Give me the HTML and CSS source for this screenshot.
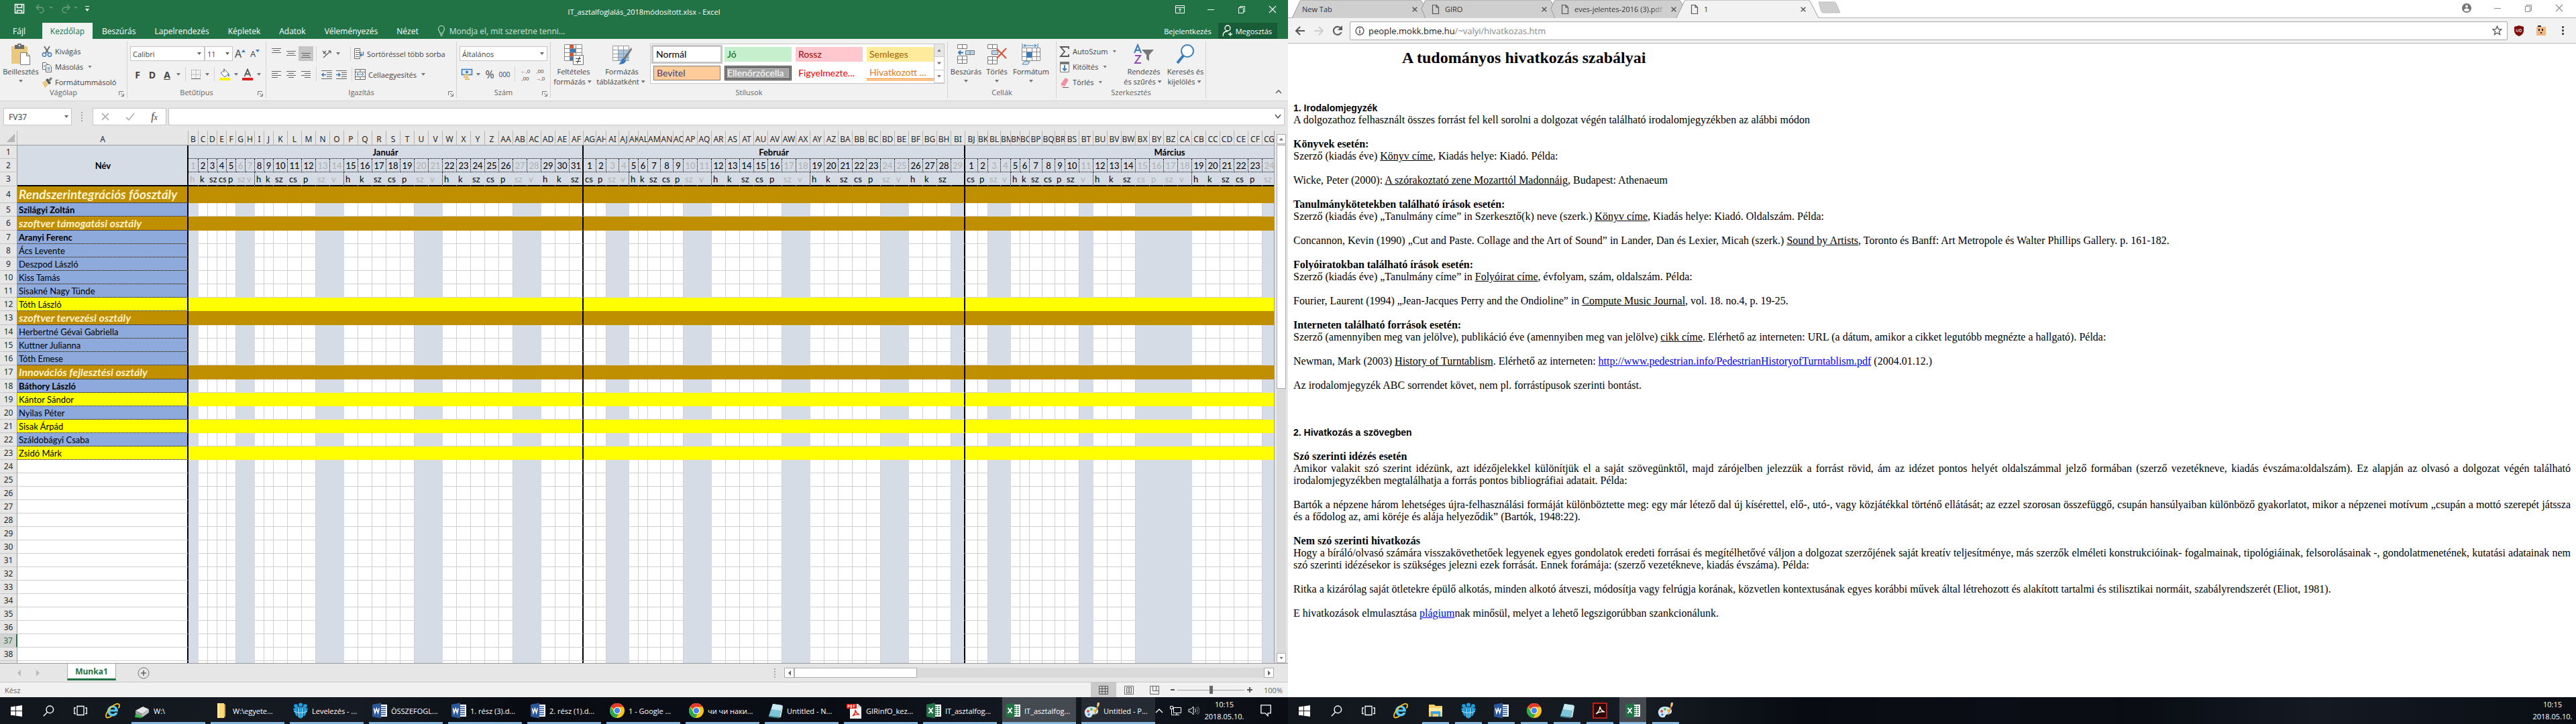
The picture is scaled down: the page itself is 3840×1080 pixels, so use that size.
FILE: index.html
```html
<!DOCTYPE html>
<html lang="hu">
<head>
<meta charset="utf-8">
<title>IT_asztalfoglalás_2018módosított.xlsx - Excel</title>
<link rel="stylesheet" href="styles.css">
</head>
<body>
<svg class="defs" aria-hidden="true">
  <symbol id="i-win" viewBox="0 0 16 16"><path fill="#fff" d="M0 2.300l6.600-.9v6.200H0zM7.500 1.300L16 0v7.600H7.500zM0 8.500h6.600v6.200L0 13.800zM7.500 8.500H16V16l-8.500-1.200z"/></symbol>
  <symbol id="i-search" viewBox="0 0 16 16"><g fill="none" stroke="#fff" stroke-width="1.300"><circle cx="9.700" cy="6" r="5"/><path d="M6.200 9.700L.8 15.200"/></g></symbol>
  <symbol id="i-view" viewBox="0 0 20 16"><g fill="none" stroke="#fff" stroke-width="1.300"><path d="M5 1.500h10v13H5zM3 4H.7v8.500H3M17 4h2.300v8.500H17"/></g></symbol>
  <symbol id="i-ie" viewBox="0 0 24 24"><path d="M12 4.500a8 8 0 1 0 7.600 10.600h-4.300a3.900 3.900 0 0 1-7.200-1.700H20A8 8 0 0 0 12 4.500zM8.200 10.600a3.800 3.800 0 0 1 7.500 0z" fill="#55c8f5" fill-rule="evenodd"/><path d="M20.500 8.500C23.800 3 21 .4 15.500 3 8 6.500 1.500 15.500 2 20.500c.4 3.300 5 2 8.500-.5" fill="none" stroke="#f7c62f" stroke-width="1.800"/></symbol>
  <symbol id="i-drive" viewBox="0 0 24 24"><path d="M2 12l11-6 9 4-10 7z" fill="#e4e4e4"/><path d="M2 12l10 5v5L2 17z" fill="#9a9a9a"/><path d="M12 17l10-7v5l-10 7z" fill="#bdbdbd"/><path d="M2 17l9 3v3L1 22z" fill="#38b54a"/></symbol>
  <symbol id="i-folder" viewBox="0 0 24 24"><path d="M6 1h10v22H6z" fill="#fbd976"/><path d="M16 2l2 1v17l-2 3z" fill="#d9a93c"/><path d="M6 1h3v22H6z" fill="#ffeaa6"/></symbol>
  <symbol id="i-explorer" viewBox="0 0 24 24"><path d="M2 3h8l2 2h10v16H2z" fill="#f6cf68"/><path d="M2 8h20v6H2z" fill="#ffe8a0"/><path d="M5 21v-8h14v8h-3v-4H8v4z" fill="#3ea1e2"/></symbol>
  <symbol id="i-mail" viewBox="0 0 24 24"><g fill="#1ba1e2"><circle cx="12" cy="3.500" r="3"/><circle cx="5" cy="5" r="2.800"/><circle cx="19" cy="5" r="2.800"/><path d="M9 7h6v15l-3 2-3-2zM1 9l6-2 1 14-3-2zM23 9l-6-2-1 14 3-2z"/></g><path d="M8 6l1.500 16M16 6l-1.500 16M2 13c6 3 14 3 20 0" fill="none" stroke="#bfe8fa"/></symbol>
  <symbol id="i-word" viewBox="0 0 24 24"><path d="M12 3h11v18H12z" fill="#fff"/><path d="M14 6h7M14 9h7M14 12h7M14 15h7M14 18h7" stroke="#2b579a" stroke-width="1.400"/><path d="M1 3l13-2.500v23L1 21z" fill="#2b579a"/><path d="M3.500 8.500l1.500 7 2.300-6.500 2.300 6.500 1.600-7" fill="none" stroke="#fff" stroke-width="1.600"/></symbol>
  <symbol id="i-excel" viewBox="0 0 24 24"><path d="M12 3h11v18H12z" fill="#fff"/><path d="M14 6h3M18 6h3M14 9h3M18 9h3M14 12h3M18 12h3M14 15h3M18 15h3M14 18h3M18 18h3" stroke="#217346" stroke-width="1.700"/><path d="M1 3l13-2.500v23L1 21z" fill="#217346"/><path d="M4.500 8l6 8M10.500 8l-6 8" stroke="#fff" stroke-width="2"/></symbol>
  <symbol id="i-chrome" viewBox="0 0 24 24"><circle cx="12" cy="12" r="11" fill="#f8c51c"/><path d="M12 1a11 11 0 0 1 9.500 5.500H12A5.500 5.500 0 0 0 7 10L2.800 6A11 11 0 0 1 12 1z" fill="#e23b2e"/><path d="M2.500 6.500L8 15a5 5 0 0 0 6 2l-3.500 6A11 11 0 0 1 2.500 6.500z" fill="#2da94f"/><circle cx="12" cy="12" r="5.300" fill="#fff"/><circle cx="12" cy="12" r="4.200" fill="#4384f3"/></symbol>
  <symbol id="i-note" viewBox="0 0 24 24"><path d="M8 2l14 2-4 18-16-2z" fill="#7cc5d6"/><path d="M8 2l14 2-2 8L6 10z" fill="#c7eaf2"/><path d="M18 22l4-18 1 2-3 16z" fill="#e9f4f6"/><path d="M2 20l16 2v1.500L2 21.500z" fill="#40808f"/></symbol>
  <symbol id="i-pdf" viewBox="0 0 24 24"><path d="M5 2h12l5 5v17H5z" fill="#f5f5f5"/><path d="M17 2l5 5h-5z" fill="#c9c9c9"/><path d="M0 2h15v7H0z" fill="#e2231a"/><path d="M2 7.500V4h2v1.800H2M6 4v3.500h1.500V4zM10 7.500V4h2.500M10 5.800h2" fill="none" stroke="#fff" stroke-width=".9"/><path d="M9 20c3-3 4.500-6 4-9 1 4 3 6 6 7-4-1-7 0-10 2z" fill="none" stroke="#e2231a" stroke-width="1.400"/></symbol>
  <symbol id="i-acro" viewBox="0 0 24 24"><path d="M2 1h20v22H2z" fill="#2a0a09" stroke="#e8261c" stroke-width="1.500"/><path d="M6 17c4-3 6-7 6-11 1 5 3 7 7 8-5-1-9 0-13 3z" fill="none" stroke="#fff" stroke-width="1.300"/></symbol>
  <symbol id="i-paint" viewBox="0 0 24 24"><path d="M11 6C4 6 0 11 1 16c1 6 6 7 9 6 2-1 1-3 3-4s7 0 8-4c1-5-4-8-10-8z" fill="#cfe6f5"/><circle cx="6" cy="13" r="2" fill="#e54b3c"/><circle cx="11" cy="10" r="1.900" fill="#58b947"/><circle cx="16" cy="12" r="1.900" fill="#f3b62b"/><circle cx="7" cy="18" r="1.700" fill="#3b7dd8"/><path d="M21 1l2 1-7 17-1-1z" fill="#d58a35"/><path d="M20 0h3l-1 6-3-1z" fill="#f1c98d"/></symbol>
  <symbol id="i-restore" viewBox="0 0 12 12"><path d="M1.500 3.500h7v8h-7zM3.500 3.500v-2h7v8h-2" fill="none" stroke="currentColor"/></symbol>
  <symbol id="i-close" viewBox="0 0 12 12"><path d="M1 1l10 10M11 1L1 11" fill="none" stroke="currentColor" stroke-width="1.100"/></symbol>
  <symbol id="i-x" viewBox="0 0 12 12"><path d="M1 1l10 10M11 1L1 11" fill="none" stroke="currentColor" stroke-width="2.200"/></symbol>
  <symbol id="i-min" viewBox="0 0 12 12"><path d="M1 6.500h10" stroke="currentColor"/></symbol>
  <symbol id="i-page" viewBox="0 0 12 16"><path d="M1.500 1.500h5.500l3.500 3.500v9.500h-9zM7 1.500V5h3.500" fill="none" stroke="#555" stroke-width="1.200"/></symbol>
  <symbol id="i-launch" viewBox="0 0 8 8"><path d="M.5 6V.5H7M3 3l4 4M7.500 3.500v4h-4" fill="none" stroke="#777"/></symbol>
  <symbol id="a-l" viewBox="0 0 14 12"><path d="M0 1.500h14M0 4.500h9M0 7.500h14M0 10.500h9" stroke="#666"/></symbol>
  <symbol id="a-c" viewBox="0 0 14 12"><path d="M0 1.500h14M3 4.500h8M0 7.500h14M3 10.500h8" stroke="#666"/></symbol>
  <symbol id="a-r" viewBox="0 0 14 12"><path d="M0 1.500h14M5 4.500h9M0 7.500h14M5 10.500h9" stroke="#666"/></symbol>
  <symbol id="a-v" viewBox="0 0 14 8"><path d="M0 .5h14M2 3.500h10M0 6.500h14" stroke="#666"/></symbol>
</svg>

<main class="desktop">
<section class="screen excel">
  <header class="titlebar">
    <div class="quick">
      <button aria-label="Mentés"><svg width="16" height="16"><path d="M1.500 1.500h13v13h-13zM4.500 1.500v5h7v-5M4.500 14.500v-4h7v4" fill="none" stroke="#fff" stroke-width="1.500"/></svg></button>
      <button class="dim" aria-label="Visszavonás"><svg width="28" height="14"><path d="M6 1L2 5l4 4M2 5h7a4 4 0 0 1 0 8H7" fill="none" stroke="#5d9476" stroke-width="1.800"/><path d="M21 4h6l-3 3z" fill="#5d9476"/></svg></button>
      <button class="dim" aria-label="Ismét"><svg width="28" height="14"><path d="M11 1l4 4-4 4M15 5H8a4 4 0 0 0 0 8h2" fill="none" stroke="#5d9476" stroke-width="1.800"/><path d="M21 4h6l-3 3z" fill="#5d9476"/></svg></button>
      <button aria-label="Testreszabás"><svg width="8" height="12"><path d="M1 2.500h6" stroke="#fff"/><path d="M1 6h6L4 10z" fill="#fff"/></svg></button>
    </div>
    <h1>IT_asztalfoglalás_2018módosított.xlsx - Excel</h1>
    <div class="winbtns">
      <button aria-label="Menüszalag"><svg width="14" height="12"><path d="M.5.500h13v11H.5zM.5 3.500h13M7 10V5M5 7l2-2 2 2" fill="none" stroke="#fff"/></svg></button>
      <button aria-label="Kis méret"><svg width="12" height="12"><use href="#i-min"/></svg></button>
      <button aria-label="Előző méret"><svg width="12" height="12"><use href="#i-restore"/></svg></button>
      <button aria-label="Bezárás"><svg width="12" height="12"><use href="#i-close"/></svg></button>
    </div>
  </header>

  <nav class="tabs">
    <button class="file">Fájl</button>
    <button class="on">Kezdőlap</button>
    <button>Beszúrás</button>
    <button>Lapelrendezés</button>
    <button>Képletek</button>
    <button>Adatok</button>
    <button>Véleményezés</button>
    <button>Nézet</button>
    <button class="tell"><svg width="12" height="16"><path d="M4 11.500C4 9 1.500 8 1.500 5a4.500 4.500 0 0 1 9 0c0 3-2.500 4-2.500 6.500zM4 13.500h4M4.500 15.500h3" fill="none" stroke="#cfe3d8" stroke-width="1.100"/></svg>Mondja el, mit szeretne tenni...</button>
    <button class="login">Bejelentkezés</button>
    <button class="share"><svg width="16" height="18"><circle cx="8" cy="5" r="4" fill="none" stroke="#fff" stroke-width="1.300"/><path d="M1 17c0-5 3-7.500 7-7.500M12 11v6M9 14h6" fill="none" stroke="#fff" stroke-width="1.300"/></svg>Megosztás</button>
  </nav>

  <div class="ribbon">
    <section class="group g-clip">
      <div class="tools row">
        <button class="big w54"><svg width="30" height="32"><path d="M1 4h24v26H1z" fill="#ecc87f"/><path d="M6 2h4a3 3 0 0 1 6 0h4v6H6z" fill="#6a6a6a"/><circle cx="13" cy="3" r="1.300" fill="#fff"/><path d="M14.500 13.500h9l5 5v13h-14zM23.500 13.500v5h5" fill="#fff" stroke="#7a7a7a"/></svg><span>Beillesztés</span><i class="car"></i></button>
        <div class="stack">
          <button class="small"><svg width="16" height="16"><path d="M4 0l6 10M12 0L6 10" stroke="#666" stroke-width="1.800"/><circle cx="4" cy="12.500" r="2.700" fill="none" stroke="#3b7ab8" stroke-width="1.400"/><circle cx="12" cy="12.500" r="2.700" fill="none" stroke="#3b7ab8" stroke-width="1.400"/></svg>Kivágás</button>
          <button class="small"><svg width="16" height="16"><path d="M1.500 1.500h5l2 2v8h-7z" fill="#fff" stroke="#666"/><path d="M6.500 4.500h5l3 3v8h-8z" fill="#fff" stroke="#666"/><path d="M8.500 8.500h4M8.500 10.500h4M8.500 12.500h4M3 5.500h2M3 7.500h2" stroke="#3b7ab8"/></svg>Másolás<i class="car"></i></button>
          <button class="small"><svg width="16" height="16"><path d="M1 8l5-3 4 6-5 5z" fill="#ecc87f"/><path d="M6 4l3-2 5 7-3 2z" fill="#555"/><path d="M10 4l4-4 2 2-3 4z" fill="#777"/></svg>Formátummásoló</button>
        </div>
      </div>
      <h2>Vágólap</h2><button class="launch" aria-label="Vágólap ablak"><svg width="8" height="8"><use href="#i-launch"/></svg></button>
    </section>

    <section class="group g-font">
      <div class="tools">
        <div class="row">
          <label class="combo w111"><select aria-label="Betűtípus"><option>Calibri</option></select></label>
          <label class="combo w42"><select aria-label="Betűméret"><option>11</option></select></label>
          <button class="t"><b class="thin">A</b><svg width="6" height="12"><path d="M0 4h6L3 0z" fill="#3b7ab8"/></svg></button>
          <button class="t"><b class="thin sm">A</b><svg width="6" height="12"><path d="M0 0h6L3 4z" fill="#3b7ab8"/></svg></button>
        </div>
        <div class="row">
          <button class="t"><b>F</b></button><button class="t"><b>D</b></button><button class="t"><b class="u">A</b></button><i class="car"></i><i class="sep"></i>
          <button class="t"><svg width="14" height="14"><path d="M.5.500h13M.5.500v13M13.500.500v13M7 .5v13M.5 7h13" stroke="#777" stroke-dasharray="1 1.500" fill="none"/><path d="M0 13.500h14" stroke="#555"/></svg></button><i class="car"></i><i class="sep"></i>
          <button class="t"><svg width="18" height="18"><path d="M3 7l6-5 6 6-6 5z" fill="#fff" stroke="#666"/><path d="M8 0v6" stroke="#666"/><path d="M14 7c3 3 2 5 1 5s-2-2-1-5z" fill="#3b7ab8"/><path d="M1 14h16v4H1z" fill="#fff200"/></svg></button><i class="car"></i>
          <button class="t"><svg width="18" height="18"><path d="M4.500 12L9 1.500 13.500 12M6 8.500h6" fill="none" stroke="#555" stroke-width="1.800"/><path d="M1 14h16v4H1z" fill="#e01e1e"/></svg></button><i class="car"></i>
        </div>
      </div>
      <h2>Betűtípus</h2><button class="launch" aria-label="Betűtípus ablak"><svg width="8" height="8"><use href="#i-launch"/></svg></button>
    </section>

    <section class="group g-align">
      <div class="tools">
        <div class="row">
          <button class="t top"><svg width="14" height="8"><use href="#a-v"/></svg></button>
          <button class="t"><svg width="14" height="8"><use href="#a-v"/></svg></button>
          <button class="t sel"><svg width="14" height="8"><use href="#a-v"/></svg></button><i class="sep"></i>
          <button class="t"><svg width="17" height="15"><path d="M3 13L14 3M14 3h-3.500M14 3v3.500" fill="none" stroke="#666" stroke-width="1.400"/><path d="M2 3l5 5M3 7l4-4" stroke="#666" stroke-width="1.600"/></svg></button><i class="car"></i><i class="gap8"></i><i class="sep"></i>
          <button class="small"><svg width="16" height="16"><path d="M1.500.500h8v15h-8z" fill="#fff" stroke="#666"/><path d="M3 3.500h5M3 6.500h9M3 9.500h5M3 12.500h5" stroke="#666"/><path d="M14.500 5v5h-4M12 8l-2 2 2 2" fill="none" stroke="#3b7ab8" stroke-width="1.300"/></svg>Sortöréssel több sorba</button>
        </div>
        <div class="row">
          <button class="t"><svg width="14" height="12"><use href="#a-l"/></svg></button>
          <button class="t"><svg width="14" height="12"><use href="#a-c"/></svg></button>
          <button class="t"><svg width="14" height="12"><use href="#a-r"/></svg></button><i class="sep"></i>
          <button class="t"><svg width="16" height="13"><path d="M0 .5h16M8 3.500h8M8 6.500h8M8 9.500h8M0 12.500h16" stroke="#666"/><path d="M7 6.500H1M3.500 4L1 6.500 3.500 9" fill="none" stroke="#3b7ab8" stroke-width="1.500"/></svg></button>
          <button class="t"><svg width="16" height="13"><path d="M0 .5h16M8 3.500h8M8 6.500h8M8 9.500h8M0 12.500h16" stroke="#666"/><path d="M0 6.500h6M3.500 4L6 6.500 3.500 9" fill="none" stroke="#3b7ab8" stroke-width="1.500"/></svg></button><i class="sep"></i>
          <button class="small"><svg width="16" height="16"><path d="M.5.500h15v15H.5zM.5 4.500h15M.5 11.500h15M8 .5v4M8 11.500v4" fill="#fff" stroke="#666"/><path d="M3 8h10M5 6L3 8l2 2M11 6l2 2-2 2" fill="none" stroke="#3b7ab8"/></svg>Cellaegyesítés<i class="car"></i></button>
        </div>
      </div>
      <h2>Igazítás</h2><button class="launch" aria-label="Igazítás ablak"><svg width="8" height="8"><use href="#i-launch"/></svg></button>
    </section>

    <section class="group g-num">
      <div class="tools">
        <div class="row"><label class="combo w131"><select aria-label="Számformátum"><option>Általános</option></select></label></div>
        <div class="row">
          <button class="t"><svg width="18" height="18"><path d="M1.500 1.500h15v8h-15z" fill="#dfeaf5" stroke="#3b7ab8" stroke-width="1.500"/><circle cx="9" cy="5.500" r="2" fill="#3b7ab8"/><path d="M5 9h7v2H5zM4 12h7v2H4zM6 15h7v2H6z" fill="#e6b564"/></svg></button><i class="car"></i>
          <button class="t big1">%</button><button class="t"><span class="tiny">000</span></button><i class="sep"></i>
          <button class="t dec"><span>←,0</span><span>,00</span></button><button class="t dec"><span>,00</span><span>→,0</span></button>
        </div>
      </div>
      <h2>Szám</h2><button class="launch" aria-label="Szám ablak"><svg width="8" height="8"><use href="#i-launch"/></svg></button>
    </section>

    <section class="group g-style">
      <div class="tools row">
        <button class="big w68"><svg width="30" height="32"><path d="M1.500 1.500h26v24h-26zM1.500 7.500h26M1.500 13.500h26M1.500 19.500h26M9.500 1.500v24M18.500 1.500v24" fill="#fff" stroke="#888"/><path d="M10 2h5v5h-5zM10 14h5v5h-5z" fill="#d9532c"/><path d="M10 8h8v5h-8zM10 20h4v5h-4z" fill="#3b7ab8"/><path d="M14.500 17.500h15v14h-15z" fill="#fff" stroke="#777"/><path d="M18 22.500h8M18 26.500h8M24.500 19.500l-4 10" stroke="#444" stroke-width="1.200"/></svg><span>Feltételes</span><span>formázás<i class="car"></i></span></button>
        <button class="big w74"><svg width="30" height="32"><path d="M1.500 3.500h24v22h-24z" fill="#fff" stroke="#999"/><path d="M9 9h17v16H9z" fill="#a9c7e3"/><path d="M1.500 9.500h24M1.500 15.500h24M1.500 20.500h24M9.500 3.500v22M17.500 3.500v22" stroke="#999"/><path d="M29 6l1 3-10 15-3-2z" fill="#777"/><path d="M17 22l4 3c0 5-6 6-11 6 4-2 3-8 7-9z" fill="#3b7ab8"/></svg><span>Formázás</span><span>táblázatként<i class="car"></i></span></button>
        <div class="gallery">
          <button class="st normal">Normál</button><button class="st good">Jó</button><button class="st bad">Rossz</button><button class="st neutral">Semleges</button>
          <button class="st input">Bevitel</button><button class="st check">Ellenőrzőcella</button><button class="st warn">Figyelmezte...</button><button class="st linked">Hivatkozott ...</button>
          <div class="gscroll"><button aria-label="Fel"><i class="car up"></i></button><button aria-label="Le"><i class="car"></i></button><button aria-label="Egyebek"><i class="car"></i></button></div>
        </div>
      </div>
      <h2>Stílusok</h2>
    </section>

    <section class="group g-cells">
      <div class="tools row">
        <button class="big w54"><svg width="28" height="32"><path d="M1.500 1.500h14v6h-14zM8.500 1.500v6M1.500 18.500h14v11h-14zM1.500 24h14M8.500 18.500v11" fill="#fff" stroke="#777"/><path d="M13.500 10.500h13v6h-13zM20 10.500v6" fill="#b9d2ea" stroke="#777"/><path d="M10 13.500H3M6 10.500l-3 3 3 3" fill="none" stroke="#3b7ab8" stroke-width="2"/></svg><span>Beszúrás</span><i class="car"></i></button>
        <button class="big w38"><svg width="30" height="32"><path d="M1.500 1.500h14v6h-14zM8.500 1.500v6M1.500 19.500h14v11h-14zM1.500 25h14M8.500 19.500v11" fill="#fff" stroke="#777"/><path d="M7.500 10.500h9v6h-9z" fill="#b9d2ea" stroke="#777"/><path d="M15 8l14 14M29 7L15 22" stroke="#dc5537" stroke-width="2.200"/></svg><span>Törlés</span><i class="car"></i></button>
        <button class="big w64"><svg width="30" height="32"><path d="M1.500 6.500h27v19h-27zM1.500 12.500h27M1.500 19.500h27M8.500 6.500v19M16.500 6.500v19M23.500 6.500v19" fill="#fff" stroke="#888"/><path d="M8 13h8v8H8z" fill="#3b7ab8"/><path d="M2 0v6M25 0v6M4 3h19M7 1L4 3l3 2M20 1l3 2-3 2M2 31l3-4h8l-3 4z" fill="none" stroke="#3b7ab8"/></svg><span>Formátum</span><i class="car"></i></button>
      </div>
      <h2>Cellák</h2>
    </section>

    <section class="group g-edit">
      <div class="tools row">
        <div class="stack">
          <button class="small"><svg width="16" height="16"><path d="M14 4V1H2l6 7-6 7h12v-3" fill="none" stroke="#555" stroke-width="1.800"/></svg>AutoSzum<i class="car"></i></button>
          <button class="small"><svg width="16" height="16"><path d="M1.500.500h13v15h-13z" fill="#fff" stroke="#777"/><path d="M1 0h14v4H1z" fill="#777"/><path d="M8 5v8M5 10l3 3 3-3" fill="none" stroke="#3b7ab8" stroke-width="1.800"/></svg>Kitöltés<i class="car"></i></button>
          <button class="small"><svg width="16" height="16"><path d="M2 11l7-10 5 3-6 10z" fill="#ef8fa0"/><path d="M2 11l6 3-2 1H3z" fill="#f8ccd3"/><path d="M5 15.500h9" stroke="#666"/></svg>Törlés<i class="car"></i></button>
        </div>
        <button class="big w60"><svg width="30" height="32"><path d="M1 14L6 2l5 12M3 10h6" fill="none" stroke="#3b7ab8" stroke-width="2"/><path d="M2 18h8L2 29h9" fill="none" stroke="#8e4db5" stroke-width="2"/><path d="M12 9h18l-7 8v9l-4-3v-6z" fill="#777"/></svg><span>Rendezés</span><span>és szűrés<i class="car"></i></span></button>
        <button class="big w60"><svg width="30" height="32"><circle cx="18" cy="11" r="9" fill="#fff" stroke="#3b7ab8" stroke-width="2"/><path d="M12 18L3 29" stroke="#3b7ab8" stroke-width="4"/></svg><span>Keresés és</span><span>kijelölés<i class="car"></i></span></button>
      </div>
      <h2>Szerkesztés</h2>
    </section>
    <button class="collapse" aria-label="Összecsukás"><svg width="10" height="8"><path d="M1 6l4-4 4 4" fill="none" stroke="#666" stroke-width="1.600"/></svg></button>
  </div>

  <div class="fbar">
    <label class="combo namebox"><input aria-label="Név mező" value="FV37"></label>
    <span class="grip"></span>
    <div class="fx">
      <button aria-label="Mégse"><svg width="12" height="12"><path d="M1 1l10 10M11 1L1 11" stroke="#b5b5b5" stroke-width="1.800"/></svg></button>
      <button aria-label="Beírás"><svg width="14" height="12"><path d="M1 7l4 4L13 1" fill="none" stroke="#b5b5b5" stroke-width="1.800"/></svg></button>
      <button class="fn" aria-label="Függvény"><i>f</i><i class="x">x</i></button>
    </div>
    <div class="formula"><input aria-label="Szerkesztőléc"><svg width="10" height="8"><path d="M1 1l4 5 4-5" fill="none" stroke="#555" stroke-width="1.600"/></svg></div>
  </div>

  <div class="sheetwrap">
    <div class="sheet"><table id="grid"></table></div>
    <div class="vscroll"><button aria-label="Fel"><i class="car up"></i></button><div class="vtrack"><span></span></div><button aria-label="Le"><i class="car"></i></button></div>
  </div>

  <div class="sheettabs">
    <div class="arrows"><svg width="36" height="12"><path d="M6 1v10L1 6z" fill="#bbb"/><path d="M29 1v10l5-5z" fill="#bbb"/></svg></div>
    <button class="tab">Munka1</button>
    <button class="plus" aria-label="Új munkalap"><svg width="18" height="18"><circle cx="9" cy="9" r="8" fill="none" stroke="#777"/><path d="M9 5v8M5 9h8" stroke="#666" stroke-width="1.600"/></svg></button>
    <span class="grip"></span>
    <div class="hscroll"><button aria-label="Balra"><svg width="6" height="10"><path d="M5 1v8L1 5z" fill="#666"/></svg></button><span class="thumb"></span><button class="end" aria-label="Jobbra"><svg width="6" height="10"><path d="M1 1v8l4-4z" fill="#666"/></svg></button></div>
  </div>
  <footer class="status">
    <span class="ready">Kész</span>
    <button class="v on" aria-label="Normál"><svg width="14" height="13"><path d="M.5.500h13v12H.5zM.5 4.500h13M.5 8.500h13M5 .5v12M9.500.500v12" fill="none" stroke="#555"/></svg></button>
    <button class="v" aria-label="Lapelrendezés"><svg width="14" height="13"><path d="M.5.500h13v12H.5zM3.500 2.500h7v8h-7zM5 4.500h4M5 6.500h4M5 8.500h4" fill="none" stroke="#666"/></svg></button>
    <button class="v" aria-label="Oldaltörés"><svg width="14" height="13"><path d="M.5.500h13v12H.5zM4.500.500v7h5v-7M9.500 7.500h4" fill="none" stroke="#666"/></svg></button>
    <button class="z" aria-label="Kicsinyítés"><svg width="8" height="10"><path d="M1 5h6" stroke="#555" stroke-width="2"/></svg></button>
    <input type="range" min="0" max="100" value="50" aria-label="Nagyítás">
    <button class="z" aria-label="Nagyítás növelése"><svg width="10" height="10"><path d="M1 5h8M5 1v8" stroke="#555" stroke-width="2"/></svg></button>
    <span class="pct">100%</span>
  </footer>

  <nav class="taskbar">
    <button class="sys"><svg width="17" height="17"><use href="#i-win"/></svg></button>
    <button class="sys"><svg width="17" height="17"><use href="#i-search"/></svg></button>
    <button class="sys"><svg width="20" height="16"><use href="#i-view"/></svg></button>
    <button class="sys"><svg width="24" height="24"><use href="#i-ie"/></svg></button>
    <div class="tasks">
      <button class="task"><svg><use href="#i-drive"/></svg>W:\</button>
      <button class="task"><svg><use href="#i-folder"/></svg>W:\egyete...</button>
      <button class="task"><svg><use href="#i-mail"/></svg>Levelezés - ...</button>
      <button class="task"><svg><use href="#i-word"/></svg>ÖSSZEFOGL...</button>
      <button class="task"><svg><use href="#i-word"/></svg>1. rész (3).d...</button>
      <button class="task"><svg><use href="#i-word"/></svg>2. rész (1).d...</button>
      <button class="task"><svg><use href="#i-chrome"/></svg>1 - Google ...</button>
      <button class="task"><svg><use href="#i-chrome"/></svg>чи чи наки...</button>
      <button class="task"><svg><use href="#i-note"/></svg>Untitled - N...</button>
      <button class="task"><svg><use href="#i-pdf"/></svg>GIRinfO_kez...</button>
      <button class="task"><svg><use href="#i-excel"/></svg>IT_asztalfog...</button>
      <button class="task active"><svg><use href="#i-excel"/></svg>IT_asztalfog...</button>
      <button class="task lit"><svg><use href="#i-paint"/></svg>Untitled - P...</button>
    </div>
    <div class="tray">
      <svg width="12" height="8"><path d="M1 7l5-5 5 5" fill="none" stroke="#fff" stroke-width="1.400"/></svg>
      <svg width="17" height="16"><path d="M5.500 3.500h11v8h-11zM10 11.500v3M7 14.500h7M.5 1.500h4v4h-4zM2.500 5.500v9h4" fill="none" stroke="#fff"/></svg>
      <svg width="17" height="14"><path d="M1 5h3l4-4v12L4 9H1z" fill="none" stroke="#fff"/><path d="M10 4c2 2 2 4 0 6" fill="none" stroke="#fff"/><path d="M12 2c3 3 3 7 0 10M14 1c4 4 4 8 0 12" fill="none" stroke="#888"/></svg>
    </div>
    <div class="clock"><span>10:15</span><span>2018.05.10.</span></div>
    <button class="notif" aria-label="Értesítések"><svg width="16" height="18"><path d="M.8.800h14.400v12H11v4l-4-4H.8z" fill="none" stroke="#fff" stroke-width="1.300"/></svg></button>
  </nav>
</section>

<section class="screen chrome">
  <header class="tabstrip">
    <button class="ctab"><svg class="shape" viewBox="0 0 207 27" preserveAspectRatio="none"><path d="M0 27L12 1.500Q13 0 15 0H190Q192 0 193 1.500L206 27" fill="#cfcfcf" stroke="#9c9c9c"/></svg><span>New Tab</span><svg class="x" width="8" height="8"><use href="#i-x"/></svg></button>
    <button class="ctab"><svg class="shape" viewBox="0 0 207 27" preserveAspectRatio="none"><path d="M6 27L0 13L5 1.500Q6 0 8 0H190Q192 0 193 1.500L206 27" fill="#cfcfcf" stroke="#9c9c9c"/></svg><svg width="12" height="16"><use href="#i-page"/></svg><span>GIRO</span><svg class="x" width="8" height="8"><use href="#i-x"/></svg></button>
    <button class="ctab"><svg class="shape" viewBox="0 0 207 27" preserveAspectRatio="none"><path d="M6 27L0 13L5 1.500Q6 0 8 0H190Q192 0 193 1.500L206 27" fill="#cfcfcf" stroke="#9c9c9c"/></svg><svg width="12" height="16"><use href="#i-page"/></svg><span class="fade">eves-jelentes-2016 (3).pdf</span><svg class="x" width="8" height="8"><use href="#i-x"/></svg></button>
    <button class="ctab on"><svg class="shape" viewBox="0 0 207 28" preserveAspectRatio="none"><path d="M-6 28L6 1.500Q7 0 9 0H190Q192 0 193 1.500L206 28" fill="#f2f2f2" stroke="#9c9c9c"/></svg><svg width="12" height="16"><use href="#i-page"/></svg><span>1</span><svg class="x" width="8" height="8"><use href="#i-x"/></svg></button>
    <button class="newtab" aria-label="Új lap"><svg width="34" height="18"><path d="M1 1h23q2 0 3 2l6 14H8q-2 0-3-2z" fill="#cfcfcf" stroke="#bdbdbd"/></svg></button>
    <div class="winbtns">
      <button aria-label="Felhasználó"><svg width="14" height="14"><circle cx="7" cy="7" r="7" fill="#757575"/><circle cx="7" cy="4.500" r="2" fill="#fff"/><path d="M3 10.500c0-4 8-4 8 0-2 2-6 2-8 0z" fill="#fff"/></svg></button>
      <button aria-label="Kis méret"><svg width="12" height="12"><use href="#i-min"/></svg></button>
      <button aria-label="Előző méret"><svg width="12" height="12"><use href="#i-restore"/></svg></button>
      <button aria-label="Bezárás"><svg width="12" height="12"><use href="#i-close"/></svg></button>
    </div>
  </header>
  <div class="cbar">
    <button aria-label="Vissza"><svg width="16" height="14"><path d="M15 7H2M8 1L2 7l6 6" fill="none" stroke="#555" stroke-width="2"/></svg></button>
    <button aria-label="Előre"><svg width="16" height="14"><path d="M1 7h13M8 1l6 6-6 6" fill="none" stroke="#ccc" stroke-width="2"/></svg></button>
    <button aria-label="Frissítés"><svg width="16" height="16"><path d="M13.500 10A6 6 0 1 1 12.500 4" fill="none" stroke="#555" stroke-width="2"/><path d="M15 0v7H8z" fill="#555"/></svg></button>
    <div class="url"><svg width="14" height="14"><circle cx="7" cy="7" r="6" fill="none" stroke="#555" stroke-width="1.300"/><path d="M7 6v5M7 3v1.600" stroke="#555" stroke-width="1.600"/></svg><span>people.mokk.bme.hu<em>/~valyi/hivatkozas.htm</em></span><svg class="star" width="15" height="15"><path d="M7.500 1l1.800 4.500 4.700.3-3.600 3 1.200 4.700-4.100-2.600-4.100 2.600 1.200-4.700L1 5.800l4.700-.3z" fill="none" stroke="#555" stroke-width="1.300"/></svg></div>
    <button aria-label="uBlock"><svg width="14" height="16"><path d="M7 0l7 2v6c0 4-4 7-7 8-3-1-7-4-7-8V2z" fill="#7f0a0a"/><path d="M3 5.500v3q1.500 1.500 3 0v-3M8 5.500v4h2q2-2 0-4z" fill="none" stroke="#fff" stroke-width=".9"/></svg></button>
    <button aria-label="Bővítmény"><svg width="16" height="16"><path d="M1 2h14v13H1z" fill="#efb680"/><path d="M3 0h5v2H3zM4 5h2v3H4zM9 5h2v3H9zM7 10h2v2H7z" fill="#222"/></svg></button>
    <button aria-label="Menü"><svg width="4" height="14"><path d="M0 0h3v3H0zM0 5h3v3H0zM0 10h3v3H0z" fill="#555"/></svg></button>
  </div>
  <article class="doc">
    <h1>A tudományos hivatkozás szabályai</h1>
    <h2>1. Irodalomjegyzék</h2>
    <p>A dolgozathoz felhasznált összes forrást fel kell sorolni a dolgozat végén található irodalomjegyzékben az alábbi módon</p>
    <h3>Könyvek esetén:</h3>
    <p>Szerző (kiadás éve) <u>Könyv címe</u>, Kiadás helye: Kiadó. Példa:</p>
    <p>Wicke, Peter (2000): <u>A szórakoztató zene Mozarttól Madonnáig</u>, Budapest: Athenaeum</p>
    <h3>Tanulmánykötetekben található írások esetén:</h3>
    <p>Szerző (kiadás éve) „Tanulmány címe” in Szerkesztő(k) neve (szerk.) <u>Könyv címe</u>, Kiadás helye: Kiadó. Oldalszám. Példa:</p>
    <p>Concannon, Kevin (1990) „Cut and Paste. Collage and the Art of Sound” in Lander, Dan és Lexier, Micah (szerk.) <u>Sound by Artists</u>, Toronto és Banff: Art Metropole és Walter Phillips Gallery. p. 161-182.</p>
    <h3>Folyóiratokban található írások esetén:</h3>
    <p>Szerző (kiadás éve) „Tanulmány címe” in <u>Folyóirat címe</u>, évfolyam, szám, oldalszám. Példa:</p>
    <p>Fourier, Laurent (1994) „Jean-Jacques Perry and the Ondioline” in <u>Compute Music Journal</u>, vol. 18. no.4, p. 19-25.</p>
    <h3>Interneten található források esetén:</h3>
    <p>Szerző (amennyiben meg van jelölve), publikáció éve (amennyiben meg van jelölve) <u>cikk címe</u>. Elérhető az interneten: URL (a dátum, amikor a cikket legutóbb megnézte a hallgató). Példa:</p>
    <p>Newman, Mark (2003) <u>History of Turntablism</u>. Elérhető az interneten: <a href="#">http://www.pedestrian.info/PedestrianHistoryofTurntablism.pdf</a> (2004.01.12.)</p>
    <p>Az irodalomjegyzék ABC sorrendet követ, nem pl. forrástípusok szerinti bontást.</p>
    <h2>2. Hivatkozás a szövegben</h2>
    <h3>Szó szerinti idézés esetén</h3>
    <p>Amikor valakit szó szerint idézünk, azt idézőjelekkel különítjük el a saját szövegünktől, majd zárójelben jelezzük a forrást rövid, ám az idézet pontos helyét oldalszámmal jelző formában (szerző vezetékneve, kiadás évszáma:oldalszám). Ez alapján az olvasó a dolgozat végén található irodalomjegyzékben megtalálhatja a forrás pontos bibliográfiai adatait. Példa:</p>
    <p>Bartók a népzene három lehetséges újra-felhasználási formáját különböztette meg: egy már létező dal új kísérettel, elő-, utó-, vagy közjátékkal történő ellátását; az ezzel szorosan összefüggő, csupán hansúlyaiban különböző gyakorlatot, mikor a népzenei motívum „csupán a mottó szerepét játssza és a fődolog az, ami köréje és alája helyeződik” (Bartók, 1948:22).</p>
    <h3>Nem szó szerinti hivatkozás</h3>
    <p>Hogy a bíráló/olvasó számára visszakövethetőek legyenek egyes gondolatok eredeti forrásai és megítélhetővé váljon a dolgozat szerzőjének saját kreatív teljesítménye, más szerzők elméleti konstrukcióinak- fogalmainak, tipológiáinak, felsorolásainak -, gondolatmenetének, kutatási adatainak nem szó szerinti idézésekor is szükséges jelezni ezek forrását. Ennek forámája: (szerző vezetékneve, kiadás évszáma). Példa:</p>
    <p>Ritka a kizárólag saját ötletekre épülő alkotás, minden alkotó átveszi, módosítja vagy felrúgja korának, közvetlen kontextusának egyes korábbi művek által létrehozott és alakított tartalmi és stilisztikai normáit, szabályrendszerét (Eliot, 1981).</p>
    <p>E hivatkozások elmulasztása <a href="#">plágium</a>nak minősül, melyet a lehető legszigorúbban szankcionálunk.</p>
  </article>
  <nav class="taskbar second">
    <button class="sys"><svg width="17" height="17"><use href="#i-win"/></svg></button>
    <button class="sys"><svg width="17" height="17"><use href="#i-search"/></svg></button>
    <button class="sys"><svg width="20" height="16"><use href="#i-view"/></svg></button>
    <button class="sys"><svg width="24" height="24"><use href="#i-ie"/></svg></button>
    <div class="tasks">
      <button class="task"><svg><use href="#i-explorer"/></svg></button>
      <button class="task"><svg><use href="#i-mail"/></svg></button>
      <button class="task"><svg><use href="#i-word"/></svg></button>
      <button class="task"><svg><use href="#i-chrome"/></svg></button>
      <button class="task"><svg><use href="#i-note"/></svg></button>
      <button class="task"><svg><use href="#i-acro"/></svg></button>
      <button class="task active"><svg><use href="#i-excel"/></svg></button>
      <button class="task"><svg><use href="#i-paint"/></svg></button>
    </div>
    <div class="clock"><span>10:15</span><span>2018.05.10.</span></div>
  </nav>
</section>
</main>
<script src="sheet.js"></script>
</body>
</html>
```

FILE: styles.css
```css
* { box-sizing: border-box; }
body { margin: 0; font-family: "Open Sans", "Noto Sans", sans-serif; font-size: 12px; color: #444; background: #fff; }
button, input, select { font: inherit; color: inherit; background: none; border: 0; padding: 0; margin: 0; }
h1, h2, h3, p { margin: 0; font-weight: normal; }
svg { display: block; flex: none; }
.defs { position: absolute; width: 0; height: 0; }
.desktop { display: grid; grid-template-columns: 1fr 1fr; height: 100vh; }
.screen { display: flex; flex-direction: column; min-width: 0; min-height: 0; overflow: hidden; }
.row { display: flex; align-items: center; }

/* Excel title bar and tabs */
.titlebar { display: grid; grid-template-columns: 1fr auto 1fr; align-items: center; height: 34px; background: #217346; color: #fff; }
.titlebar h1 { font-size: 11px; }
.quick { display: flex; align-items: center; gap: 9px; padding: 0 0 8px 21px; height: 34px; }
.quick button:first-child { margin-right: 6px; }
.winbtns { display: flex; justify-content: flex-end; align-items: center; padding: 0 0 6px 0; }
.winbtns button { width: 46px; display: flex; justify-content: center; }
.tabs { display: flex; height: 24px; background: #217346; color: #fff; }
.tabs button { padding: 0 14px; white-space: nowrap; }
.tabs .file { width: 63px; padding: 0 6px 0 0; }
.tabs .on { background: #f1f1f1; color: #217346; width: 75px; padding: 0; }
.tabs .tell { display: flex; align-items: center; gap: 6px; color: #cfe3d8; }
.tabs .login { margin-left: auto; padding-right: 10px; font-size: 11px; }
.tabs .share { display: flex; align-items: center; gap: 4px; background: #185c37; padding: 0 8px 0 6px; margin-right: 16px; font-size: 11px; }

/* Ribbon */
.ribbon { display: grid; grid-template-columns: 190px 207px 284px 140px 592px 162px 223px 1fr; height: 93px; background: #f1f1f1; border-bottom: 1px solid #d2d2d2; font-size: 11px; }
.group { position: relative; display: flex; flex-direction: column; justify-content: space-between; margin: 4px 0; border-right: 1px solid #d2d2d2; }
.group h2 { font-size: 11px; line-height: 16px; text-align: center; color: #666; }
.launch { position: absolute; right: 4px; bottom: 2px; }
.tools { height: 68px; padding: 7px 4px 0; display: flex; flex-direction: column; gap: 9px; }
.tools.row { flex-direction: row; padding-top: 3px; gap: 4px; align-items: flex-start; }
.tools > .row { height: 22px; }
.car { display: inline-block; width: 12px; height: 4px; flex: none; background: linear-gradient(#777, #777) 3px 0 / 7px 4px no-repeat; clip-path: polygon(3px 0, 9px 0, 6px 4px); }
.big span .car { margin-bottom: 2px; }
.car.up { clip-path: polygon(3px 4px, 9px 4px, 6px 0); }
.sep { width: 1px; height: 22px; margin: 0 4px; background: #d5d5d5; flex: none; }
.gap8 { width: 8px; }
.t { width: 22px; height: 22px; flex: none; display: flex; align-items: center; justify-content: center; }
.t b { font-size: 14px; }
.t b.thin { font-size: 16px; font-weight: 400; }
.t b.sm { font-size: 13px; }
.t .u { text-decoration: underline; }
.t.sel { background: #c6c6c6; align-items: flex-end; padding-bottom: 4px; }
.t.top { align-items: flex-start; padding-top: 3px; }
.big1 { font-size: 16px; }
.tiny { font-size: 10px; }
.dec { flex-direction: column; font-size: 8px; line-height: 11px; }
.big { display: flex; flex-direction: column; align-items: center; line-height: 15px; white-space: nowrap; flex: none; }
.big svg { margin-bottom: 2px; }
.big > .car { margin-top: 5px; }
.w54 { width: 54px; } .w38 { width: 38px; } .w64 { width: 64px; } .w60 { width: 58px; } .w68 { width: 60px; } .w74 { width: 76px; }
.stack { display: flex; flex-direction: column; flex: none; }
.g-edit .stack { width: 93px; }
.small { display: flex; align-items: center; gap: 4px; height: 23px; white-space: nowrap; }
.combo { position: relative; display: flex; align-items: center; height: 22px; border: 1px solid #c6c6c6; background: #fff; }
.combo::after { content: ""; position: absolute; right: 4px; width: 6px; height: 4px; background: #666; clip-path: polygon(0 0, 100% 0, 50% 100%); }
.combo select, .combo input { width: 100%; height: 100%; padding: 0 3px; appearance: none; outline: 0; }
.w111 { width: 111px; } .w42 { width: 42px; } .w131 { width: 131px; }
.gallery { position: relative; display: grid; grid-template-columns: repeat(4, 100px); grid-template-rows: 22px 22px; gap: 6px; align-content: start; width: 441px; height: 60px; padding: 4px 0 0 4px; border: 1px solid #c6c6c6; background: #fff; overflow: hidden; }
.st { text-align: left; padding: 0 4px; font-family: Lato, sans-serif; font-size: 14px; line-height: 18px; white-space: nowrap; overflow: hidden; }
.normal { color: #000; outline: 3px solid #c6c6c6; }
.good { background: #c6efce; color: #006100; }
.bad { background: #ffc7ce; color: #9c0006; }
.neutral { background: #ffeb9c; color: #9c6500; }
.input { background: #ffcc99; color: #3f3f76; border: 1px solid #7f7f7f; }
.check { background: #a5a5a5; color: #fff; border: 3px double #3f3f3f; padding: 0 1px; line-height: 16px; }
.warn { color: #e00; }
.linked { color: #e07d13; border-bottom: 3px double #ff8001; }
.gscroll { position: absolute; right: 0; top: 0; bottom: 0; width: 15px; display: grid; grid-template-rows: 1fr 1fr 1fr; border-left: 1px solid #c6c6c6; }
.gscroll button { display: flex; align-items: center; justify-content: center; border-bottom: 1px solid #c6c6c6; }
.gscroll button:first-child { background: #e6e6e6; }
.g-cells .tools { gap: 0; padding-left: 0; }
.collapse { align-self: end; justify-self: end; padding: 0 9px 9px 0; }

/* Formula bar */
.fbar { display: flex; align-items: center; height: 44px; padding: 2px 5px 0; background: #e6e6e6; flex: none; }
.fbar .namebox { width: 102px; height: 26px; font-family: "Noto Sans", sans-serif; }
.namebox input { padding-left: 7px; }
.grip { width: 3px; height: 14px; margin: 0 14px; border-left: 2px dotted #a6a6a6; }
.fx { display: flex; align-items: center; justify-content: space-around; width: 110px; height: 26px; border: 1px solid #c6c6c6; background: #fff; margin-right: 3px; }
.fn { font-family: "Liberation Serif", serif; font-size: 16px; }
.fn .x { font-size: 12px; }
.formula { display: flex; align-items: center; flex: 1; height: 26px; padding-right: 4px; border: 1px solid #c6c6c6; background: #fff; }
.formula input { flex: 1; height: 100%; outline: 0; }

/* Worksheet */
.sheetwrap { display: flex; flex: 1; min-height: 0; background: #e6e6e6; border-bottom: 1px solid #9b9b9b; }
.sheet { flex: 1; min-width: 0; overflow: hidden; background: #fff; border-right: 1px solid #9b9b9b; }
#grid { table-layout: fixed; border-collapse: separate; border-spacing: 0; font-family: Lato, sans-serif; font-size: 13px; line-height: 16px; color: #000; }
#grid td, #grid th { padding: 0; height: 20px; overflow: hidden; white-space: nowrap; font-weight: 400; text-align: center; }
#grid thead th { height: 22px; padding-top: 4px; background: #e6e6e6; border-right: 1px solid #b5b5b5; border-bottom: 1px solid #9b9b9b; font-family: "Noto Sans", sans-serif; font-size: 12px; color: #262626; }
#grid tbody th { background: #e6e6e6; border-right: 1px solid #9b9b9b; border-bottom: 1px solid #c6c6c6; font-family: "Noto Sans", sans-serif; font-size: 12px; color: #262626; }
#grid tbody th.cur { color: #217346; background: #d2d2d2; border-right: 2px solid #217346; }
#grid td { border-right: 1px solid #d0d0d0; border-bottom: 1px solid #d0d0d0; }
#grid td.edge { border-right: 2px solid #000; }
#grid td.off { background: #d6dce5; border-color: #d6dce5; }
#grid td.off.edge { border-right-color: #000; }
#grid td.head { background: #d6dce5; font-weight: 700; border-bottom: 1px dotted #000; font-size: 13px; }
#grid td.name { text-align: left; padding-left: 2px; font-size: 13px; border-right: 2px solid #000; }
#grid td.title { background: #d6dce5; text-align: center; font-weight: 700; border-bottom: 2px solid #000; font-size: 13px; }
#grid td.num { background: #d6dce5; border-right: 1px dotted #000; border-bottom: 1px dotted #000; }
#grid td.day { background: #d6dce5; border-right: 1px solid #d6dce5; border-bottom: 2px solid #000; text-align: left; padding-left: 2px; }
#grid td.week { border-right: 1px dotted #000; }
#grid td.head.edge, #grid td.num.edge, #grid td.day.edge { border-right: 2px solid #000; }
#grid .gray { color: #b0b0b0; }
#grid tr.r21 td, #grid tr.r21 th { height: 21px; }
#grid tr.r25 td, #grid tr.r25 th { height: 25px; }
#grid tr.gold td { background: #bf8f00; border-color: #bf8f00; }
#grid tr.yellow td { background: #ff0; border-color: #ff0; }
#grid tr.gold td.edge, #grid tr.yellow td.edge { border-right-color: #000; }
#grid tr.blue td.name { background: #8ea9db; }
#grid tr.person td.name { border-bottom: 1px dotted #000; border-right-color: #000; }
#grid tr.gold td.name { color: #fff2cc; font-style: italic; font-weight: 700; font-size: 16px; line-height: 20px; }
#grid tr.r25 td.name { font-size: 19px; line-height: 24px; }
#grid tr.bold td.name { font-weight: 700; }
.corner { background: linear-gradient(135deg, transparent 50%, #b5b5b5 50%) 10px 5px / 12px 12px no-repeat, #e6e6e6 !important; }
.vscroll { width: 20px; padding: 5px 3px 0; display: flex; flex-direction: column; }
.vscroll button { height: 15px; border: 1px solid #ababab; background: #fff; display: flex; align-items: center; justify-content: center; }
.vtrack { flex: 1; background: #dadada; padding-top: 1px; }
.vtrack span { display: block; height: 48%; background: #fff; border: 1px solid #ababab; }

.sheettabs { display: flex; align-items: center; height: 28px; flex: none; background: #e6e6e6; border-bottom: 1px solid #c6c6c6; }
.arrows { width: 100px; padding-left: 25px; }
.sheettabs .tab { align-self: flex-start; width: 73px; height: 25px; background: #fff; color: #217346; font-weight: 700; border: solid #ababab; border-width: 0 1px; border-bottom: 3px solid #217346; }
.plus { margin-left: 32px; }
.sheettabs .grip { margin: 0 12px 0 auto; }
.hscroll { display: flex; width: 38%; height: 15px; background: #dadada; margin-right: 21px; }
.hscroll button { width: 15px; display: flex; align-items: center; justify-content: center; border: 1px solid #ababab; background: #fff; }
.thumb { width: 25%; background: #fff; border: 1px solid #ababab; }
.hscroll .end { margin-left: auto; }
.status { display: flex; align-items: center; height: 22px; flex: none; background: #f1f1f1; padding-right: 8px; color: #666; font-size: 11px; }
.ready { margin: 0 auto 0 7px; }
.v { width: 38px; height: 22px; display: flex; align-items: center; justify-content: center; }
.v.on { background: #c9c9c9; }
.z { width: 15px; display: flex; justify-content: center; }
.status input { width: 100px; height: 16px; appearance: none; background: linear-gradient(#a0a0a0, #a0a0a0) 0 50% / 100% 1px no-repeat; }
.status input::-webkit-slider-thumb { appearance: none; width: 5px; height: 12px; background: #666; }
.pct { width: 42px; text-align: right; }

/* Taskbar */
.taskbar { display: flex; height: 40px; flex: none; background: linear-gradient(90deg, #12161d 0, #161a22 28%, #080b12 40%, #0b0e16 55%, #090c13 65%, #151922 80%, #0a0d14 100%); color: #fff; }
.taskbar button { display: flex; align-items: center; justify-content: center; flex: none; }
.sys { width: 48px; }
.tasks { display: flex; gap: 8px; padding-left: 4px; }
.taskbar .task { width: 110px; gap: 5px; padding-left: 4px; justify-content: flex-start; white-space: nowrap; border-bottom: 3px solid #84b5dc; border-top: 3px solid transparent; font-size: 11px; }
.task svg { width: 24px; height: 24px; }
.taskbar .active { background: #454950; }
.taskbar .lit { background: #262a32; }
.tray { display: flex; align-items: center; gap: 10px; margin-left: auto; }
.clock { display: flex; flex-direction: column; align-items: center; justify-content: center; line-height: 18px; width: 78px; font-size: 11px; }
.notif { width: 50px; margin-right: 8px; }
.second .tasks { gap: 9px; padding-left: 8px; }
.second .task { width: 40px; padding: 0; justify-content: center; }
.second .clock { margin-left: auto; width: 70px; }

/* Browser */
.tabstrip { display: flex; height: 27px; padding-left: 6px; background: #fff; border-bottom: 1px solid #b6b6b6; color: #333; flex: none; position: relative; z-index: 1; font-size: 11px; }
.ctab { position: relative; display: flex; align-items: center; gap: 8px; width: 193px; height: 27px; padding: 0 0 0 15px; text-align: left; z-index: 0; }
.ctab span { flex: 1; white-space: nowrap; overflow: hidden; }
.fade { mask-image: linear-gradient(90deg, #000 85%, transparent); }
.ctab .shape { position: absolute; left: 0; top: 0; width: 207px; height: 27px; z-index: -1; overflow: visible; }
.ctab .x { margin-right: 6px; color: #555; }
.ctab.on { z-index: 2; }
.newtab { margin: 0 0 4px 12px; }
.chrome .winbtns { margin-left: auto; padding: 0 2px 2px 0; color: #888; }
.cbar { display: flex; align-items: center; height: 38px; flex: none; background: #f2f2f2; border-bottom: 1px solid #b6b6b6; padding: 0 3px 0 4px; }
.cbar button { width: 28px; display: flex; justify-content: center; }
.url ~ button { width: 33px; }
.url { display: flex; align-items: center; gap: 6px; flex: 1; height: 28px; margin-left: 4px; padding: 0 7px; background: #fff; border: 1px solid #a9a9a9; border-radius: 2px; font-size: 13px; color: #222; }
.url span { flex: 1; }
.url em { font-style: normal; color: #888; }
.doc { flex: 1; min-height: 0; padding: 0 8px; font-family: "Liberation Serif", serif; font-size: 16px; line-height: 18px; color: #000; text-align: justify; }
.doc h1 { margin: 8px 0 0 162px; font-size: 24px; line-height: 27px; font-weight: 700; }
.doc h2 { margin-top: 52px; font-family: "Liberation Sans", sans-serif; font-size: 14px; line-height: 18px; font-weight: 700; }
.doc h3 { margin-top: 18px; font-size: 16px; font-weight: 700; }
.doc p + p { margin-top: 18px; }
.doc a { color: #00e; }
```

FILE: sheet.js
```js
// Seating plan: one column per day, one row per colleague.
const months = [
  { name: "Január", days: 31, first: 0, off: [1, 6, 7, 13, 14, 20, 21, 27, 28],
    widths: [15, 14, 14, 14, 14, 14, 14, 14, 14], weeks: [8, 15, 22] },
  { name: "Február", days: 29, first: 3, off: [3, 4, 10, 11, 17, 18, 24, 25, 29],
    widths: [19, 15, 19, 15, 14, 14, 19, 19, 15], weeks: [5, 12, 19] },
  { name: "Március", days: 31, first: 3, off: [3, 4, 11, 15, 16, 17, 18, 24, 25, 31],
    widths: [19, 15, 19, 15, 14, 14, 19, 19, 15], weeks: [5, 12, 19, 26] }
];
const letters = ["h", "k", "sz", "cs", "p", "sz", "v"];
const people = [
  ["Rendszerintegrációs főosztály", "gold r25"], ["Szilágyi Zoltán", "blue bold"],
  ["szoftver támogatási osztály", "gold r21"], ["Aranyi Ferenc", "blue bold"],
  ["Ács Levente", "blue"], ["Deszpod László", "blue"], ["Kiss Tamás", "blue"],
  ["Sisakné Nagy Tünde", "blue"], ["Tóth László", "yellow"],
  ["szoftver tervezési osztály", "gold r21"], ["Herbertné Gévai Gabriella", "blue"],
  ["Kuttner Julianna", "blue"], ["Tóth Emese", "blue"],
  ["Innovációs fejlesztési osztály", "gold r21"], ["Báthory László", "blue bold"],
  ["Kántor Sándor", "yellow"], ["Nyilas Péter", "blue"], ["Sisak Árpád", "yellow"],
  ["Száldobágyi Csaba", "blue"], ["Zsidó Márk", "yellow"]
];

const days = [];
months.forEach((m, mi) => {
  for (let d = 1; d <= m.days; d++) {
    days.push({
      d, off: m.off.includes(d), edge: d === m.days,
      width: m.widths[d - 1] || 21,
      letter: mi === 1 && d === 29 ? "" : letters[(m.first + d - 1) % 7],
      week: m.weeks.includes(d + 1)
    });
  }
});

function columnName(n) {
  let s = "";
  for (; n > 0; n = Math.floor((n - 1) / 26)) s = String.fromCharCode(65 + (n - 1) % 26) + s;
  return s;
}

const total = 281 + days.reduce((sum, day) => sum + day.width, 0);
let html = '<colgroup><col style="width:26px"><col style="width:255px">' +
  days.map(day => `<col style="width:${day.width}px">`).join("") + "</colgroup>";
html += '<thead><tr><th class="corner"></th><th>A</th>' +
  days.map((day, i) => `<th>${columnName(i + 2)}</th>`).join("") + "</tr></thead><tbody>";
html += '<tr><th>1</th><td class="name title" rowspan="3">Név</td>' +
  months.map(m => `<td class="head edge" colspan="${m.days}">${m.name}</td>`).join("") + "</tr>";
html += "<tr><th>2</th>" + days.map(day =>
  `<td class="num${day.edge ? " edge" : ""}${day.off ? " gray" : ""}">${day.d}</td>`).join("") + "</tr>";
html += '<tr class="r21"><th>3</th>' + days.map(day =>
  `<td class="day${day.edge ? " edge" : ""}${day.week ? " week" : ""}${day.off ? " gray" : ""}">${day.letter}</td>`).join("") + "</tr>";

for (let r = 4; r <= 39; r++) {
  const [name, kind] = people[r - 4] || ["", ""];
  html += `<tr class="${kind}${name ? " person" : ""}"><th${r === 37 ? ' class="cur"' : ""}>${r}</th><td class="name">${name}</td>` +
    days.map(day => `<td class="${day.off ? "off" : ""}${day.edge ? " edge" : ""}"></td>`).join("") + "</tr>";
}
const grid = document.getElementById("grid");
grid.style.width = total + "px";
grid.innerHTML = html + "</tbody>";
```
